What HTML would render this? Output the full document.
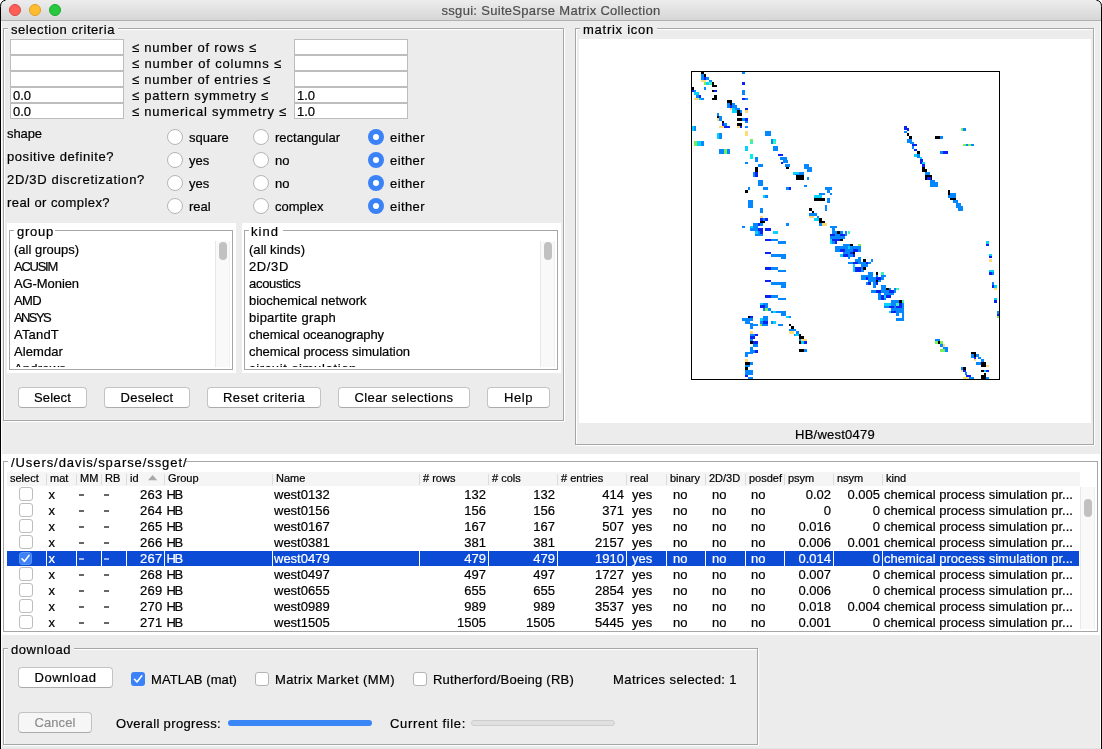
<!DOCTYPE html>
<html><head><meta charset="utf-8"><style>
html,body{margin:0;padding:0;width:1102px;height:749px;overflow:hidden;background:#fff}
#w{position:absolute;left:0;top:0;width:1102px;height:749px;overflow:hidden;will-change:transform;background:#fff}
.t{position:absolute;white-space:pre;font-family:"Liberation Sans",sans-serif}
.a{position:absolute}
</style></head><body><div id="w">
<div class="a" style="left:0;top:0;width:1102px;height:749px;background:#ececec;border-radius:6px 6px 0 0"></div>
<div style="position:absolute;left:1px;top:2px;width:1px;height:746px;background:#fff"></div>
<div style="position:absolute;left:1100px;top:2px;width:1px;height:746px;background:#fff"></div>
<div style="position:absolute;left:2px;top:748px;width:1098px;height:1px;background:#e4e4e4"></div>
<div class="a" style="left:1px;top:1px;width:1100px;height:19px;border-radius:5px 5px 0 0;background:linear-gradient(#ececec,#d6d6d6)"></div>
<div style="position:absolute;left:1px;top:20px;width:1100px;height:1px;background:#b1b1b1"></div>
<div class="a" style="left:9px;top:4px;width:12px;height:12px;box-sizing:border-box;border-radius:50%;background:#fe5f57;border:0.5px solid #e0443e"></div>
<div class="a" style="left:29px;top:4px;width:12px;height:12px;box-sizing:border-box;border-radius:50%;background:#febc2e;border:0.5px solid #dea123"></div>
<div class="a" style="left:49px;top:4px;width:12px;height:12px;box-sizing:border-box;border-radius:50%;background:#28c840;border:0.5px solid #1aab29"></div>
<div class="t" style="left:441.50px;top:4px;font-size:13px;line-height:13px;letter-spacing:0.303px;color:#4d4d4d;-webkit-text-stroke:0.2px #4d4d4d;">ssgui: SuiteSparse Matrix Collection</div>
<svg class="a" style="left:0;top:0" width="1102" height="749"><path d="M0.5 749 L0.5 6.5 Q0.5 0.8 5.5 0.3" stroke="#000" stroke-width="1" fill="none"/><path d="M1101.5 749 L1101.5 6.5 Q1101.5 0.8 1096.5 0.3" stroke="#000" stroke-width="1" fill="none"/></svg>
<div style="position:absolute;left:4px;top:29px;width:561px;height:393px;box-sizing:border-box;border:1px solid #ffffff;"></div>
<div style="position:absolute;left:3px;top:28px;width:561px;height:393px;box-sizing:border-box;border:1px solid #a6a6a6;"></div>
<div style="position:absolute;left:8px;top:24px;width:110px;height:10px;background:#ececec"></div>
<div class="t" style="left:11.00px;top:23px;font-size:13px;line-height:13px;letter-spacing:0.559px;color:#000;-webkit-text-stroke:0.2px #000;">selection criteria</div>
<div style="position:absolute;left:10px;top:39px;width:114px;height:16px;box-sizing:border-box;border:1px solid #bdbdbd;background:#fff"></div>
<div style="position:absolute;left:10px;top:55px;width:114px;height:16px;box-sizing:border-box;border:1px solid #bdbdbd;background:#fff"></div>
<div style="position:absolute;left:10px;top:71px;width:114px;height:16px;box-sizing:border-box;border:1px solid #bdbdbd;background:#fff"></div>
<div style="position:absolute;left:10px;top:87px;width:114px;height:16px;box-sizing:border-box;border:1px solid #bdbdbd;background:#fff"></div>
<div style="position:absolute;left:10px;top:103px;width:114px;height:16px;box-sizing:border-box;border:1px solid #bdbdbd;background:#fff"></div>
<div style="position:absolute;left:294px;top:39px;width:114px;height:16px;box-sizing:border-box;border:1px solid #bdbdbd;background:#fff"></div>
<div style="position:absolute;left:294px;top:55px;width:114px;height:16px;box-sizing:border-box;border:1px solid #bdbdbd;background:#fff"></div>
<div style="position:absolute;left:294px;top:71px;width:114px;height:16px;box-sizing:border-box;border:1px solid #bdbdbd;background:#fff"></div>
<div style="position:absolute;left:294px;top:87px;width:114px;height:16px;box-sizing:border-box;border:1px solid #bdbdbd;background:#fff"></div>
<div style="position:absolute;left:294px;top:103px;width:114px;height:16px;box-sizing:border-box;border:1px solid #bdbdbd;background:#fff"></div>
<div class="t" style="left:132.00px;top:41px;font-size:13px;line-height:13px;letter-spacing:0.773px;color:#000;-webkit-text-stroke:0.2px #000;">≤ number of rows ≤</div>
<div class="t" style="left:132.00px;top:57px;font-size:13px;line-height:13px;letter-spacing:0.855px;color:#000;-webkit-text-stroke:0.2px #000;">≤ number of columns ≤</div>
<div class="t" style="left:132.00px;top:73px;font-size:13px;line-height:13px;letter-spacing:0.778px;color:#000;-webkit-text-stroke:0.2px #000;">≤ number of entries ≤</div>
<div class="t" style="left:132.00px;top:89px;font-size:13px;line-height:13px;letter-spacing:0.754px;color:#000;-webkit-text-stroke:0.2px #000;">≤ pattern symmetry ≤</div>
<div class="t" style="left:132.00px;top:105px;font-size:13px;line-height:13px;letter-spacing:0.782px;color:#000;-webkit-text-stroke:0.2px #000;">≤ numerical symmetry ≤</div>
<div class="t" style="left:13.00px;top:89px;font-size:13px;line-height:13px;letter-spacing:0.000px;color:#000;-webkit-text-stroke:0.2px #000;">0.0</div>
<div class="t" style="left:13.00px;top:105px;font-size:13px;line-height:13px;letter-spacing:0.000px;color:#000;-webkit-text-stroke:0.2px #000;">0.0</div>
<div class="t" style="left:297.00px;top:89px;font-size:13px;line-height:13px;letter-spacing:0.000px;color:#000;-webkit-text-stroke:0.2px #000;">1.0</div>
<div class="t" style="left:297.00px;top:105px;font-size:13px;line-height:13px;letter-spacing:0.000px;color:#000;-webkit-text-stroke:0.2px #000;">1.0</div>
<div class="t" style="left:7.00px;top:127px;font-size:13px;line-height:13px;letter-spacing:-0.084px;color:#000;-webkit-text-stroke:0.2px #000;">shape</div>
<div class="t" style="left:7.00px;top:150px;font-size:13px;line-height:13px;letter-spacing:0.564px;color:#000;-webkit-text-stroke:0.2px #000;">positive definite?</div>
<div class="t" style="left:7.00px;top:173px;font-size:13px;line-height:13px;letter-spacing:0.688px;color:#000;-webkit-text-stroke:0.2px #000;">2D/3D discretization?</div>
<div class="t" style="left:7.00px;top:196px;font-size:13px;line-height:13px;letter-spacing:0.431px;color:#000;-webkit-text-stroke:0.2px #000;">real or complex?</div>
<div class="a" style="left:167px;top:129px;width:16px;height:16px;box-sizing:border-box;border-radius:50%;background:#fff;border:1px solid #b5b5b5"></div>
<div class="a" style="left:253px;top:129px;width:16px;height:16px;box-sizing:border-box;border-radius:50%;background:#fff;border:1px solid #b5b5b5"></div>
<div class="a" style="left:368px;top:129px;width:16px;height:16px;border-radius:50%;background:#3b82f7"></div>
<div class="a" style="left:373px;top:134px;width:6px;height:6px;border-radius:50%;background:#fff"></div>
<div class="t" style="left:189.00px;top:131px;font-size:13px;line-height:13px;letter-spacing:0.000px;color:#000;-webkit-text-stroke:0.2px #000;">square</div>
<div class="t" style="left:275.00px;top:131px;font-size:13px;line-height:13px;letter-spacing:0.000px;color:#000;-webkit-text-stroke:0.2px #000;">rectangular</div>
<div class="t" style="left:390.00px;top:131px;font-size:13px;line-height:13px;letter-spacing:0.411px;color:#000;-webkit-text-stroke:0.2px #000;">either</div>
<div class="a" style="left:167px;top:152px;width:16px;height:16px;box-sizing:border-box;border-radius:50%;background:#fff;border:1px solid #b5b5b5"></div>
<div class="a" style="left:253px;top:152px;width:16px;height:16px;box-sizing:border-box;border-radius:50%;background:#fff;border:1px solid #b5b5b5"></div>
<div class="a" style="left:368px;top:152px;width:16px;height:16px;border-radius:50%;background:#3b82f7"></div>
<div class="a" style="left:373px;top:157px;width:6px;height:6px;border-radius:50%;background:#fff"></div>
<div class="t" style="left:189.00px;top:154px;font-size:13px;line-height:13px;letter-spacing:0.000px;color:#000;-webkit-text-stroke:0.2px #000;">yes</div>
<div class="t" style="left:275.00px;top:154px;font-size:13px;line-height:13px;letter-spacing:0.000px;color:#000;-webkit-text-stroke:0.2px #000;">no</div>
<div class="t" style="left:390.00px;top:154px;font-size:13px;line-height:13px;letter-spacing:0.411px;color:#000;-webkit-text-stroke:0.2px #000;">either</div>
<div class="a" style="left:167px;top:175px;width:16px;height:16px;box-sizing:border-box;border-radius:50%;background:#fff;border:1px solid #b5b5b5"></div>
<div class="a" style="left:253px;top:175px;width:16px;height:16px;box-sizing:border-box;border-radius:50%;background:#fff;border:1px solid #b5b5b5"></div>
<div class="a" style="left:368px;top:175px;width:16px;height:16px;border-radius:50%;background:#3b82f7"></div>
<div class="a" style="left:373px;top:180px;width:6px;height:6px;border-radius:50%;background:#fff"></div>
<div class="t" style="left:189.00px;top:177px;font-size:13px;line-height:13px;letter-spacing:0.000px;color:#000;-webkit-text-stroke:0.2px #000;">yes</div>
<div class="t" style="left:275.00px;top:177px;font-size:13px;line-height:13px;letter-spacing:0.000px;color:#000;-webkit-text-stroke:0.2px #000;">no</div>
<div class="t" style="left:390.00px;top:177px;font-size:13px;line-height:13px;letter-spacing:0.411px;color:#000;-webkit-text-stroke:0.2px #000;">either</div>
<div class="a" style="left:167px;top:198px;width:16px;height:16px;box-sizing:border-box;border-radius:50%;background:#fff;border:1px solid #b5b5b5"></div>
<div class="a" style="left:253px;top:198px;width:16px;height:16px;box-sizing:border-box;border-radius:50%;background:#fff;border:1px solid #b5b5b5"></div>
<div class="a" style="left:368px;top:198px;width:16px;height:16px;border-radius:50%;background:#3b82f7"></div>
<div class="a" style="left:373px;top:203px;width:6px;height:6px;border-radius:50%;background:#fff"></div>
<div class="t" style="left:189.00px;top:200px;font-size:13px;line-height:13px;letter-spacing:0.000px;color:#000;-webkit-text-stroke:0.2px #000;">real</div>
<div class="t" style="left:275.00px;top:200px;font-size:13px;line-height:13px;letter-spacing:0.000px;color:#000;-webkit-text-stroke:0.2px #000;">complex</div>
<div class="t" style="left:390.00px;top:200px;font-size:13px;line-height:13px;letter-spacing:0.411px;color:#000;-webkit-text-stroke:0.2px #000;">either</div>
<div style="position:absolute;left:7px;top:223px;width:229px;height:150px;background:#fff"></div>
<div style="position:absolute;left:9px;top:230px;width:224px;height:140px;box-sizing:border-box;border:1px solid #a6a6a6;"></div>
<div style="position:absolute;left:14px;top:225px;width:0px;height:10px;background:#fff;width:41px"></div>
<div class="t" style="left:17.00px;top:225px;font-size:13px;line-height:13px;letter-spacing:0.750px;color:#000;-webkit-text-stroke:0.2px #000;">group</div>
<div class="a" style="left:10px;top:241px;width:222px;height:126px;overflow:hidden">
<div class="t" style="left:4.00px;top:2px;font-size:13px;line-height:13px;letter-spacing:-0.003px;color:#000;-webkit-text-stroke:0.2px #000;">(all groups)</div>
<div class="t" style="left:4.00px;top:19px;font-size:13px;line-height:13px;letter-spacing:-1.260px;color:#000;-webkit-text-stroke:0.2px #000;">ACUSIM</div>
<div class="t" style="left:4.00px;top:36px;font-size:13px;line-height:13px;letter-spacing:-0.083px;color:#000;-webkit-text-stroke:0.2px #000;">AG-Monien</div>
<div class="t" style="left:4.00px;top:53px;font-size:13px;line-height:13px;letter-spacing:-0.630px;color:#000;-webkit-text-stroke:0.2px #000;">AMD</div>
<div class="t" style="left:4.00px;top:70px;font-size:13px;line-height:13px;letter-spacing:-1.616px;color:#000;-webkit-text-stroke:0.2px #000;">ANSYS</div>
<div class="t" style="left:4.00px;top:87px;font-size:13px;line-height:13px;letter-spacing:0.193px;color:#000;-webkit-text-stroke:0.2px #000;">ATandT</div>
<div class="t" style="left:4.00px;top:104px;font-size:13px;line-height:13px;letter-spacing:0.083px;color:#000;-webkit-text-stroke:0.2px #000;">Alemdar</div>
<div class="t" style="left:4.00px;top:121px;font-size:13px;line-height:13px;letter-spacing:0.203px;color:#000;-webkit-text-stroke:0.2px #000;">Andrews</div>
</div>
<div style="position:absolute;left:215px;top:241px;width:15px;height:126px;background:#f9f9f9;border-left:1px solid #e8e8e8;border-right:1px solid #f0f0f0;box-sizing:border-box"></div>
<div class="a" style="left:219px;top:242px;width:8px;height:18px;border-radius:4px;background:#c1c1c1"></div>
<div style="position:absolute;left:242px;top:223px;width:319px;height:150px;background:#fff"></div>
<div style="position:absolute;left:244px;top:230px;width:314px;height:140px;box-sizing:border-box;border:1px solid #a6a6a6;"></div>
<div style="position:absolute;left:249px;top:225px;width:0px;height:10px;background:#fff;width:34px"></div>
<div class="t" style="left:251.00px;top:225px;font-size:13px;line-height:13px;letter-spacing:1.035px;color:#000;-webkit-text-stroke:0.2px #000;">kind</div>
<div class="a" style="left:245px;top:241px;width:312px;height:126px;overflow:hidden">
<div class="t" style="left:4.00px;top:2px;font-size:13px;line-height:13px;letter-spacing:0.034px;color:#000;-webkit-text-stroke:0.2px #000;">(all kinds)</div>
<div class="t" style="left:4.00px;top:19px;font-size:13px;line-height:13px;letter-spacing:0.628px;color:#000;-webkit-text-stroke:0.2px #000;">2D/3D</div>
<div class="t" style="left:4.00px;top:36px;font-size:13px;line-height:13px;letter-spacing:-0.300px;color:#000;-webkit-text-stroke:0.2px #000;">acoustics</div>
<div class="t" style="left:4.00px;top:53px;font-size:13px;line-height:13px;letter-spacing:-0.015px;color:#000;-webkit-text-stroke:0.2px #000;">biochemical network</div>
<div class="t" style="left:4.00px;top:70px;font-size:13px;line-height:13px;letter-spacing:0.258px;color:#000;-webkit-text-stroke:0.2px #000;">bipartite graph</div>
<div class="t" style="left:4.00px;top:87px;font-size:13px;line-height:13px;letter-spacing:-0.110px;color:#000;-webkit-text-stroke:0.2px #000;">chemical oceanography</div>
<div class="t" style="left:4.00px;top:104px;font-size:13px;line-height:13px;letter-spacing:-0.058px;color:#000;-webkit-text-stroke:0.2px #000;">chemical process simulation</div>
<div class="t" style="left:4.00px;top:121px;font-size:13px;line-height:13px;letter-spacing:0.661px;color:#000;-webkit-text-stroke:0.2px #000;">circuit simulation</div>
</div>
<div style="position:absolute;left:540px;top:241px;width:15px;height:126px;background:#f9f9f9;border-left:1px solid #e8e8e8;border-right:1px solid #f0f0f0;box-sizing:border-box"></div>
<div class="a" style="left:544px;top:242px;width:8px;height:18px;border-radius:4px;background:#c1c1c1"></div>
<div class="a" style="left:18px;top:387px;width:69px;height:21px;box-sizing:border-box;border:1px solid #c3c3c3;border-bottom-color:#ababab;border-radius:4px;background:#fff"></div>
<div class="t" style="left:34.00px;top:391px;font-size:13px;line-height:13px;letter-spacing:0.143px;color:#000;-webkit-text-stroke:0.2px #000;">Select</div>
<div class="a" style="left:104px;top:387px;width:86px;height:21px;box-sizing:border-box;border:1px solid #c3c3c3;border-bottom-color:#ababab;border-radius:4px;background:#fff"></div>
<div class="t" style="left:120.50px;top:391px;font-size:13px;line-height:13px;letter-spacing:0.303px;color:#000;-webkit-text-stroke:0.2px #000;">Deselect</div>
<div class="a" style="left:207px;top:387px;width:114px;height:21px;box-sizing:border-box;border:1px solid #c3c3c3;border-bottom-color:#ababab;border-radius:4px;background:#fff"></div>
<div class="t" style="left:223.00px;top:391px;font-size:13px;line-height:13px;letter-spacing:0.387px;color:#000;-webkit-text-stroke:0.2px #000;">Reset criteria</div>
<div class="a" style="left:338px;top:387px;width:132px;height:21px;box-sizing:border-box;border:1px solid #c3c3c3;border-bottom-color:#ababab;border-radius:4px;background:#fff"></div>
<div class="t" style="left:354.50px;top:391px;font-size:13px;line-height:13px;letter-spacing:0.406px;color:#000;-webkit-text-stroke:0.2px #000;">Clear selections</div>
<div class="a" style="left:487px;top:387px;width:63px;height:21px;box-sizing:border-box;border:1px solid #c3c3c3;border-bottom-color:#ababab;border-radius:4px;background:#fff"></div>
<div class="t" style="left:504.00px;top:391px;font-size:13px;line-height:13px;letter-spacing:0.562px;color:#000;-webkit-text-stroke:0.2px #000;">Help</div>
<div style="position:absolute;left:576px;top:29px;width:519px;height:417px;box-sizing:border-box;border:1px solid #ffffff;"></div>
<div style="position:absolute;left:575px;top:28px;width:519px;height:417px;box-sizing:border-box;border:1px solid #a6a6a6;"></div>
<div style="position:absolute;left:580px;top:24px;width:77px;height:10px;background:#ececec"></div>
<div class="t" style="left:583.00px;top:23px;font-size:13px;line-height:13px;letter-spacing:0.740px;color:#000;-webkit-text-stroke:0.2px #000;">matrix icon</div>
<div style="position:absolute;left:579px;top:39px;width:512px;height:384px;background:#fff"></div>
<div style="position:absolute;left:691px;top:71px;width:309px;height:309px;box-sizing:border-box;border:1px solid #000;"></div>
<div class="t" style="left:795.00px;top:428px;font-size:13px;line-height:13px;letter-spacing:0.243px;color:#000;-webkit-text-stroke:0.2px #000;">HB/west0479</div>
<div style="position:absolute;left:1px;top:454px;width:1100px;height:181px;background:#fff"></div>
<div style="position:absolute;left:3px;top:461px;width:1095px;height:171px;box-sizing:border-box;border:1px solid #a6a6a6;"></div>
<div style="position:absolute;left:8px;top:457px;width:178px;height:10px;background:#fff"></div>
<div class="t" style="left:11.00px;top:456px;font-size:13px;line-height:13px;letter-spacing:0.925px;color:#000;-webkit-text-stroke:0.2px #000;">/Users/davis/sparse/ssget/</div>
<div style="position:absolute;left:7px;top:472px;width:1073px;height:14px;background:#f5f5f5"></div>
<div class="t" style="left:10.00px;top:473px;font-size:11px;line-height:11px;letter-spacing:0.000px;color:#000;-webkit-text-stroke:0.2px #000;">select</div>
<div class="t" style="left:50.00px;top:473px;font-size:11px;line-height:11px;letter-spacing:0.000px;color:#000;-webkit-text-stroke:0.2px #000;">mat</div>
<div style="position:absolute;left:46px;top:474px;width:1px;height:11px;background:#dcdcdc"></div>
<div class="t" style="left:80.00px;top:473px;font-size:11px;line-height:11px;letter-spacing:0.000px;color:#000;-webkit-text-stroke:0.2px #000;">MM</div>
<div style="position:absolute;left:76px;top:474px;width:1px;height:11px;background:#dcdcdc"></div>
<div class="t" style="left:105.00px;top:473px;font-size:11px;line-height:11px;letter-spacing:0.000px;color:#000;-webkit-text-stroke:0.2px #000;">RB</div>
<div style="position:absolute;left:101px;top:474px;width:1px;height:11px;background:#dcdcdc"></div>
<div class="t" style="left:130.00px;top:473px;font-size:11px;line-height:11px;letter-spacing:0.000px;color:#000;-webkit-text-stroke:0.2px #000;">id</div>
<div style="position:absolute;left:126px;top:474px;width:1px;height:11px;background:#dcdcdc"></div>
<div class="t" style="left:168.00px;top:473px;font-size:11px;line-height:11px;letter-spacing:0.000px;color:#000;-webkit-text-stroke:0.2px #000;">Group</div>
<div style="position:absolute;left:164px;top:474px;width:1px;height:11px;background:#dcdcdc"></div>
<div class="t" style="left:276.00px;top:473px;font-size:11px;line-height:11px;letter-spacing:0.000px;color:#000;-webkit-text-stroke:0.2px #000;">Name</div>
<div style="position:absolute;left:272px;top:474px;width:1px;height:11px;background:#dcdcdc"></div>
<div class="t" style="left:423.00px;top:473px;font-size:11px;line-height:11px;letter-spacing:0.000px;color:#000;-webkit-text-stroke:0.2px #000;"># rows</div>
<div style="position:absolute;left:419px;top:474px;width:1px;height:11px;background:#dcdcdc"></div>
<div class="t" style="left:492.00px;top:473px;font-size:11px;line-height:11px;letter-spacing:0.000px;color:#000;-webkit-text-stroke:0.2px #000;"># cols</div>
<div style="position:absolute;left:488px;top:474px;width:1px;height:11px;background:#dcdcdc"></div>
<div class="t" style="left:561.00px;top:473px;font-size:11px;line-height:11px;letter-spacing:0.000px;color:#000;-webkit-text-stroke:0.2px #000;"># entries</div>
<div style="position:absolute;left:557px;top:474px;width:1px;height:11px;background:#dcdcdc"></div>
<div class="t" style="left:630.00px;top:473px;font-size:11px;line-height:11px;letter-spacing:0.000px;color:#000;-webkit-text-stroke:0.2px #000;">real</div>
<div style="position:absolute;left:626px;top:474px;width:1px;height:11px;background:#dcdcdc"></div>
<div class="t" style="left:670.00px;top:473px;font-size:11px;line-height:11px;letter-spacing:0.000px;color:#000;-webkit-text-stroke:0.2px #000;">binary</div>
<div style="position:absolute;left:666px;top:474px;width:1px;height:11px;background:#dcdcdc"></div>
<div class="t" style="left:709.00px;top:473px;font-size:11px;line-height:11px;letter-spacing:0.000px;color:#000;-webkit-text-stroke:0.2px #000;">2D/3D</div>
<div style="position:absolute;left:705px;top:474px;width:1px;height:11px;background:#dcdcdc"></div>
<div class="t" style="left:749.00px;top:473px;font-size:11px;line-height:11px;letter-spacing:0.000px;color:#000;-webkit-text-stroke:0.2px #000;">posdef</div>
<div style="position:absolute;left:745px;top:474px;width:1px;height:11px;background:#dcdcdc"></div>
<div class="t" style="left:788.00px;top:473px;font-size:11px;line-height:11px;letter-spacing:0.000px;color:#000;-webkit-text-stroke:0.2px #000;">psym</div>
<div style="position:absolute;left:784px;top:474px;width:1px;height:11px;background:#dcdcdc"></div>
<div class="t" style="left:837.00px;top:473px;font-size:11px;line-height:11px;letter-spacing:0.000px;color:#000;-webkit-text-stroke:0.2px #000;">nsym</div>
<div style="position:absolute;left:833px;top:474px;width:1px;height:11px;background:#dcdcdc"></div>
<div class="t" style="left:886.00px;top:473px;font-size:11px;line-height:11px;letter-spacing:0.000px;color:#000;-webkit-text-stroke:0.2px #000;">kind</div>
<div style="position:absolute;left:882px;top:474px;width:1px;height:11px;background:#dcdcdc"></div>
<svg class="a" style="left:148px;top:474px" width="10" height="7"><path d="M0 6.2 L4.6 1 L9.2 6.2 Z" fill="#a9a9a9"/></svg>
<div class="a" style="left:19px;top:487px;width:14px;height:14px;box-sizing:border-box;border-radius:3px;background:#fff;border:1px solid #bdbdbd"></div>
<div class="t" style="left:48.50px;top:488px;font-size:13px;line-height:13px;letter-spacing:0.000px;color:#000;-webkit-text-stroke:0.2px #000;">x</div>
<div style="position:absolute;left:79px;top:494px;width:5px;height:2px;background:#000;opacity:0.6"></div>
<div style="position:absolute;left:104px;top:494px;width:5px;height:2px;background:#000;opacity:0.6"></div>
<div class="t" style="left:140.00px;top:488px;font-size:13px;line-height:13px;letter-spacing:0.266px;color:#000;-webkit-text-stroke:0.2px #000;">263</div>
<div class="t" style="left:166.50px;top:488px;font-size:13px;line-height:13px;letter-spacing:-1.281px;color:#000;-webkit-text-stroke:0.2px #000;">HB</div>
<div class="t" style="left:274.00px;top:488px;font-size:13px;line-height:13px;letter-spacing:0.000px;color:#000;-webkit-text-stroke:0.2px #000;">west0132</div>
<div class="t" style="left:464.30px;top:488px;font-size:13px;line-height:13px;letter-spacing:0.000px;color:#000;-webkit-text-stroke:0.2px #000;">132</div>
<div class="t" style="left:533.30px;top:488px;font-size:13px;line-height:13px;letter-spacing:0.000px;color:#000;-webkit-text-stroke:0.2px #000;">132</div>
<div class="t" style="left:602.30px;top:488px;font-size:13px;line-height:13px;letter-spacing:0.000px;color:#000;-webkit-text-stroke:0.2px #000;">414</div>
<div class="t" style="left:632.00px;top:488px;font-size:13px;line-height:13px;letter-spacing:0.000px;color:#000;-webkit-text-stroke:0.2px #000;">yes</div>
<div class="t" style="left:673.00px;top:488px;font-size:13px;line-height:13px;letter-spacing:0.000px;color:#000;-webkit-text-stroke:0.2px #000;">no</div>
<div class="t" style="left:712.00px;top:488px;font-size:13px;line-height:13px;letter-spacing:0.000px;color:#000;-webkit-text-stroke:0.2px #000;">no</div>
<div class="t" style="left:751.00px;top:488px;font-size:13px;line-height:13px;letter-spacing:0.000px;color:#000;-webkit-text-stroke:0.2px #000;">no</div>
<div class="t" style="left:805.69px;top:488px;font-size:13px;line-height:13px;letter-spacing:0.000px;color:#000;-webkit-text-stroke:0.2px #000;">0.02</div>
<div class="t" style="left:847.45px;top:488px;font-size:13px;line-height:13px;letter-spacing:0.000px;color:#000;-webkit-text-stroke:0.2px #000;">0.005</div>
<div class="t" style="left:884.00px;top:488px;font-size:13px;line-height:13px;letter-spacing:0.035px;color:#000;-webkit-text-stroke:0.2px #000;">chemical process simulation pr...</div>
<div class="a" style="left:19px;top:503px;width:14px;height:14px;box-sizing:border-box;border-radius:3px;background:#fff;border:1px solid #bdbdbd"></div>
<div class="t" style="left:48.50px;top:504px;font-size:13px;line-height:13px;letter-spacing:0.000px;color:#000;-webkit-text-stroke:0.2px #000;">x</div>
<div style="position:absolute;left:79px;top:510px;width:5px;height:2px;background:#000;opacity:0.6"></div>
<div style="position:absolute;left:104px;top:510px;width:5px;height:2px;background:#000;opacity:0.6"></div>
<div class="t" style="left:140.00px;top:504px;font-size:13px;line-height:13px;letter-spacing:0.266px;color:#000;-webkit-text-stroke:0.2px #000;">264</div>
<div class="t" style="left:166.50px;top:504px;font-size:13px;line-height:13px;letter-spacing:-1.281px;color:#000;-webkit-text-stroke:0.2px #000;">HB</div>
<div class="t" style="left:274.00px;top:504px;font-size:13px;line-height:13px;letter-spacing:0.000px;color:#000;-webkit-text-stroke:0.2px #000;">west0156</div>
<div class="t" style="left:464.30px;top:504px;font-size:13px;line-height:13px;letter-spacing:0.000px;color:#000;-webkit-text-stroke:0.2px #000;">156</div>
<div class="t" style="left:533.30px;top:504px;font-size:13px;line-height:13px;letter-spacing:0.000px;color:#000;-webkit-text-stroke:0.2px #000;">156</div>
<div class="t" style="left:602.30px;top:504px;font-size:13px;line-height:13px;letter-spacing:0.000px;color:#000;-webkit-text-stroke:0.2px #000;">371</div>
<div class="t" style="left:632.00px;top:504px;font-size:13px;line-height:13px;letter-spacing:0.000px;color:#000;-webkit-text-stroke:0.2px #000;">yes</div>
<div class="t" style="left:673.00px;top:504px;font-size:13px;line-height:13px;letter-spacing:0.000px;color:#000;-webkit-text-stroke:0.2px #000;">no</div>
<div class="t" style="left:712.00px;top:504px;font-size:13px;line-height:13px;letter-spacing:0.000px;color:#000;-webkit-text-stroke:0.2px #000;">no</div>
<div class="t" style="left:751.00px;top:504px;font-size:13px;line-height:13px;letter-spacing:0.000px;color:#000;-webkit-text-stroke:0.2px #000;">no</div>
<div class="t" style="left:823.77px;top:504px;font-size:13px;line-height:13px;letter-spacing:0.000px;color:#000;-webkit-text-stroke:0.2px #000;">0</div>
<div class="t" style="left:872.77px;top:504px;font-size:13px;line-height:13px;letter-spacing:0.000px;color:#000;-webkit-text-stroke:0.2px #000;">0</div>
<div class="t" style="left:884.00px;top:504px;font-size:13px;line-height:13px;letter-spacing:0.035px;color:#000;-webkit-text-stroke:0.2px #000;">chemical process simulation pr...</div>
<div class="a" style="left:19px;top:519px;width:14px;height:14px;box-sizing:border-box;border-radius:3px;background:#fff;border:1px solid #bdbdbd"></div>
<div class="t" style="left:48.50px;top:520px;font-size:13px;line-height:13px;letter-spacing:0.000px;color:#000;-webkit-text-stroke:0.2px #000;">x</div>
<div style="position:absolute;left:79px;top:526px;width:5px;height:2px;background:#000;opacity:0.6"></div>
<div style="position:absolute;left:104px;top:526px;width:5px;height:2px;background:#000;opacity:0.6"></div>
<div class="t" style="left:140.00px;top:520px;font-size:13px;line-height:13px;letter-spacing:0.266px;color:#000;-webkit-text-stroke:0.2px #000;">265</div>
<div class="t" style="left:166.50px;top:520px;font-size:13px;line-height:13px;letter-spacing:-1.281px;color:#000;-webkit-text-stroke:0.2px #000;">HB</div>
<div class="t" style="left:274.00px;top:520px;font-size:13px;line-height:13px;letter-spacing:0.000px;color:#000;-webkit-text-stroke:0.2px #000;">west0167</div>
<div class="t" style="left:464.30px;top:520px;font-size:13px;line-height:13px;letter-spacing:0.000px;color:#000;-webkit-text-stroke:0.2px #000;">167</div>
<div class="t" style="left:533.30px;top:520px;font-size:13px;line-height:13px;letter-spacing:0.000px;color:#000;-webkit-text-stroke:0.2px #000;">167</div>
<div class="t" style="left:602.30px;top:520px;font-size:13px;line-height:13px;letter-spacing:0.000px;color:#000;-webkit-text-stroke:0.2px #000;">507</div>
<div class="t" style="left:632.00px;top:520px;font-size:13px;line-height:13px;letter-spacing:0.000px;color:#000;-webkit-text-stroke:0.2px #000;">yes</div>
<div class="t" style="left:673.00px;top:520px;font-size:13px;line-height:13px;letter-spacing:0.000px;color:#000;-webkit-text-stroke:0.2px #000;">no</div>
<div class="t" style="left:712.00px;top:520px;font-size:13px;line-height:13px;letter-spacing:0.000px;color:#000;-webkit-text-stroke:0.2px #000;">no</div>
<div class="t" style="left:751.00px;top:520px;font-size:13px;line-height:13px;letter-spacing:0.000px;color:#000;-webkit-text-stroke:0.2px #000;">no</div>
<div class="t" style="left:798.45px;top:520px;font-size:13px;line-height:13px;letter-spacing:0.000px;color:#000;-webkit-text-stroke:0.2px #000;">0.016</div>
<div class="t" style="left:872.77px;top:520px;font-size:13px;line-height:13px;letter-spacing:0.000px;color:#000;-webkit-text-stroke:0.2px #000;">0</div>
<div class="t" style="left:884.00px;top:520px;font-size:13px;line-height:13px;letter-spacing:0.035px;color:#000;-webkit-text-stroke:0.2px #000;">chemical process simulation pr...</div>
<div class="a" style="left:19px;top:535px;width:14px;height:14px;box-sizing:border-box;border-radius:3px;background:#fff;border:1px solid #bdbdbd"></div>
<div class="t" style="left:48.50px;top:536px;font-size:13px;line-height:13px;letter-spacing:0.000px;color:#000;-webkit-text-stroke:0.2px #000;">x</div>
<div style="position:absolute;left:79px;top:542px;width:5px;height:2px;background:#000;opacity:0.6"></div>
<div style="position:absolute;left:104px;top:542px;width:5px;height:2px;background:#000;opacity:0.6"></div>
<div class="t" style="left:140.00px;top:536px;font-size:13px;line-height:13px;letter-spacing:0.266px;color:#000;-webkit-text-stroke:0.2px #000;">266</div>
<div class="t" style="left:166.50px;top:536px;font-size:13px;line-height:13px;letter-spacing:-1.281px;color:#000;-webkit-text-stroke:0.2px #000;">HB</div>
<div class="t" style="left:274.00px;top:536px;font-size:13px;line-height:13px;letter-spacing:0.000px;color:#000;-webkit-text-stroke:0.2px #000;">west0381</div>
<div class="t" style="left:464.30px;top:536px;font-size:13px;line-height:13px;letter-spacing:0.000px;color:#000;-webkit-text-stroke:0.2px #000;">381</div>
<div class="t" style="left:533.30px;top:536px;font-size:13px;line-height:13px;letter-spacing:0.000px;color:#000;-webkit-text-stroke:0.2px #000;">381</div>
<div class="t" style="left:595.08px;top:536px;font-size:13px;line-height:13px;letter-spacing:0.000px;color:#000;-webkit-text-stroke:0.2px #000;">2157</div>
<div class="t" style="left:632.00px;top:536px;font-size:13px;line-height:13px;letter-spacing:0.000px;color:#000;-webkit-text-stroke:0.2px #000;">yes</div>
<div class="t" style="left:673.00px;top:536px;font-size:13px;line-height:13px;letter-spacing:0.000px;color:#000;-webkit-text-stroke:0.2px #000;">no</div>
<div class="t" style="left:712.00px;top:536px;font-size:13px;line-height:13px;letter-spacing:0.000px;color:#000;-webkit-text-stroke:0.2px #000;">no</div>
<div class="t" style="left:751.00px;top:536px;font-size:13px;line-height:13px;letter-spacing:0.000px;color:#000;-webkit-text-stroke:0.2px #000;">no</div>
<div class="t" style="left:798.45px;top:536px;font-size:13px;line-height:13px;letter-spacing:0.000px;color:#000;-webkit-text-stroke:0.2px #000;">0.006</div>
<div class="t" style="left:847.45px;top:536px;font-size:13px;line-height:13px;letter-spacing:0.000px;color:#000;-webkit-text-stroke:0.2px #000;">0.001</div>
<div class="t" style="left:884.00px;top:536px;font-size:13px;line-height:13px;letter-spacing:0.035px;color:#000;-webkit-text-stroke:0.2px #000;">chemical process simulation pr...</div>
<div style="position:absolute;left:7px;top:551px;width:39px;height:15px;background:#0b4bd6"></div>
<div style="position:absolute;left:47px;top:551px;width:29px;height:15px;background:#0b4bd6"></div>
<div style="position:absolute;left:77px;top:551px;width:24px;height:15px;background:#0b4bd6"></div>
<div style="position:absolute;left:102px;top:551px;width:24px;height:15px;background:#0b4bd6"></div>
<div style="position:absolute;left:127px;top:551px;width:37px;height:15px;background:#0b4bd6"></div>
<div style="position:absolute;left:165px;top:551px;width:107px;height:15px;background:#0b4bd6"></div>
<div style="position:absolute;left:273px;top:551px;width:146px;height:15px;background:#0b4bd6"></div>
<div style="position:absolute;left:420px;top:551px;width:68px;height:15px;background:#0b4bd6"></div>
<div style="position:absolute;left:489px;top:551px;width:68px;height:15px;background:#0b4bd6"></div>
<div style="position:absolute;left:558px;top:551px;width:68px;height:15px;background:#0b4bd6"></div>
<div style="position:absolute;left:627px;top:551px;width:39px;height:15px;background:#0b4bd6"></div>
<div style="position:absolute;left:667px;top:551px;width:38px;height:15px;background:#0b4bd6"></div>
<div style="position:absolute;left:706px;top:551px;width:39px;height:15px;background:#0b4bd6"></div>
<div style="position:absolute;left:746px;top:551px;width:38px;height:15px;background:#0b4bd6"></div>
<div style="position:absolute;left:785px;top:551px;width:48px;height:15px;background:#0b4bd6"></div>
<div style="position:absolute;left:834px;top:551px;width:48px;height:15px;background:#0b4bd6"></div>
<div style="position:absolute;left:883px;top:551px;width:196px;height:15px;background:#0b4bd6"></div>
<div class="a" style="left:19px;top:552px;width:13px;height:13px;box-sizing:border-box;border-radius:3px;background:#3f82f7;border:1px solid #5a94f5"></div>
<svg class="a" style="left:19px;top:552px" width="13" height="13"><path d="M3 6.8 L5.4 9.4 L10 3.4" stroke="#fff" stroke-width="1.6" fill="none" stroke-linecap="round" stroke-linejoin="round"/></svg>
<div class="t" style="left:48.50px;top:552px;font-size:13px;line-height:13px;letter-spacing:0.000px;color:#fff;-webkit-text-stroke:0.2px #fff;">x</div>
<div style="position:absolute;left:79px;top:558px;width:5px;height:2px;background:#fff;opacity:0.6"></div>
<div style="position:absolute;left:104px;top:558px;width:5px;height:2px;background:#fff;opacity:0.6"></div>
<div class="t" style="left:140.00px;top:552px;font-size:13px;line-height:13px;letter-spacing:0.266px;color:#fff;-webkit-text-stroke:0.2px #fff;">267</div>
<div class="t" style="left:166.50px;top:552px;font-size:13px;line-height:13px;letter-spacing:-1.281px;color:#fff;-webkit-text-stroke:0.2px #fff;">HB</div>
<div class="t" style="left:274.00px;top:552px;font-size:13px;line-height:13px;letter-spacing:0.000px;color:#fff;-webkit-text-stroke:0.2px #fff;">west0479</div>
<div class="t" style="left:464.30px;top:552px;font-size:13px;line-height:13px;letter-spacing:0.000px;color:#fff;-webkit-text-stroke:0.2px #fff;">479</div>
<div class="t" style="left:533.30px;top:552px;font-size:13px;line-height:13px;letter-spacing:0.000px;color:#fff;-webkit-text-stroke:0.2px #fff;">479</div>
<div class="t" style="left:595.08px;top:552px;font-size:13px;line-height:13px;letter-spacing:0.000px;color:#fff;-webkit-text-stroke:0.2px #fff;">1910</div>
<div class="t" style="left:632.00px;top:552px;font-size:13px;line-height:13px;letter-spacing:0.000px;color:#fff;-webkit-text-stroke:0.2px #fff;">yes</div>
<div class="t" style="left:673.00px;top:552px;font-size:13px;line-height:13px;letter-spacing:0.000px;color:#fff;-webkit-text-stroke:0.2px #fff;">no</div>
<div class="t" style="left:712.00px;top:552px;font-size:13px;line-height:13px;letter-spacing:0.000px;color:#fff;-webkit-text-stroke:0.2px #fff;">no</div>
<div class="t" style="left:751.00px;top:552px;font-size:13px;line-height:13px;letter-spacing:0.000px;color:#fff;-webkit-text-stroke:0.2px #fff;">no</div>
<div class="t" style="left:798.45px;top:552px;font-size:13px;line-height:13px;letter-spacing:0.000px;color:#fff;-webkit-text-stroke:0.2px #fff;">0.014</div>
<div class="t" style="left:872.77px;top:552px;font-size:13px;line-height:13px;letter-spacing:0.000px;color:#fff;-webkit-text-stroke:0.2px #fff;">0</div>
<div class="t" style="left:884.00px;top:552px;font-size:13px;line-height:13px;letter-spacing:0.035px;color:#fff;-webkit-text-stroke:0.2px #fff;">chemical process simulation pr...</div>
<div class="a" style="left:19px;top:567px;width:14px;height:14px;box-sizing:border-box;border-radius:3px;background:#fff;border:1px solid #bdbdbd"></div>
<div class="t" style="left:48.50px;top:568px;font-size:13px;line-height:13px;letter-spacing:0.000px;color:#000;-webkit-text-stroke:0.2px #000;">x</div>
<div style="position:absolute;left:79px;top:574px;width:5px;height:2px;background:#000;opacity:0.6"></div>
<div style="position:absolute;left:104px;top:574px;width:5px;height:2px;background:#000;opacity:0.6"></div>
<div class="t" style="left:140.00px;top:568px;font-size:13px;line-height:13px;letter-spacing:0.266px;color:#000;-webkit-text-stroke:0.2px #000;">268</div>
<div class="t" style="left:166.50px;top:568px;font-size:13px;line-height:13px;letter-spacing:-1.281px;color:#000;-webkit-text-stroke:0.2px #000;">HB</div>
<div class="t" style="left:274.00px;top:568px;font-size:13px;line-height:13px;letter-spacing:0.000px;color:#000;-webkit-text-stroke:0.2px #000;">west0497</div>
<div class="t" style="left:464.30px;top:568px;font-size:13px;line-height:13px;letter-spacing:0.000px;color:#000;-webkit-text-stroke:0.2px #000;">497</div>
<div class="t" style="left:533.30px;top:568px;font-size:13px;line-height:13px;letter-spacing:0.000px;color:#000;-webkit-text-stroke:0.2px #000;">497</div>
<div class="t" style="left:595.08px;top:568px;font-size:13px;line-height:13px;letter-spacing:0.000px;color:#000;-webkit-text-stroke:0.2px #000;">1727</div>
<div class="t" style="left:632.00px;top:568px;font-size:13px;line-height:13px;letter-spacing:0.000px;color:#000;-webkit-text-stroke:0.2px #000;">yes</div>
<div class="t" style="left:673.00px;top:568px;font-size:13px;line-height:13px;letter-spacing:0.000px;color:#000;-webkit-text-stroke:0.2px #000;">no</div>
<div class="t" style="left:712.00px;top:568px;font-size:13px;line-height:13px;letter-spacing:0.000px;color:#000;-webkit-text-stroke:0.2px #000;">no</div>
<div class="t" style="left:751.00px;top:568px;font-size:13px;line-height:13px;letter-spacing:0.000px;color:#000;-webkit-text-stroke:0.2px #000;">no</div>
<div class="t" style="left:798.45px;top:568px;font-size:13px;line-height:13px;letter-spacing:0.000px;color:#000;-webkit-text-stroke:0.2px #000;">0.007</div>
<div class="t" style="left:872.77px;top:568px;font-size:13px;line-height:13px;letter-spacing:0.000px;color:#000;-webkit-text-stroke:0.2px #000;">0</div>
<div class="t" style="left:884.00px;top:568px;font-size:13px;line-height:13px;letter-spacing:0.035px;color:#000;-webkit-text-stroke:0.2px #000;">chemical process simulation pr...</div>
<div class="a" style="left:19px;top:583px;width:14px;height:14px;box-sizing:border-box;border-radius:3px;background:#fff;border:1px solid #bdbdbd"></div>
<div class="t" style="left:48.50px;top:584px;font-size:13px;line-height:13px;letter-spacing:0.000px;color:#000;-webkit-text-stroke:0.2px #000;">x</div>
<div style="position:absolute;left:79px;top:590px;width:5px;height:2px;background:#000;opacity:0.6"></div>
<div style="position:absolute;left:104px;top:590px;width:5px;height:2px;background:#000;opacity:0.6"></div>
<div class="t" style="left:140.00px;top:584px;font-size:13px;line-height:13px;letter-spacing:0.266px;color:#000;-webkit-text-stroke:0.2px #000;">269</div>
<div class="t" style="left:166.50px;top:584px;font-size:13px;line-height:13px;letter-spacing:-1.281px;color:#000;-webkit-text-stroke:0.2px #000;">HB</div>
<div class="t" style="left:274.00px;top:584px;font-size:13px;line-height:13px;letter-spacing:0.000px;color:#000;-webkit-text-stroke:0.2px #000;">west0655</div>
<div class="t" style="left:464.30px;top:584px;font-size:13px;line-height:13px;letter-spacing:0.000px;color:#000;-webkit-text-stroke:0.2px #000;">655</div>
<div class="t" style="left:533.30px;top:584px;font-size:13px;line-height:13px;letter-spacing:0.000px;color:#000;-webkit-text-stroke:0.2px #000;">655</div>
<div class="t" style="left:595.08px;top:584px;font-size:13px;line-height:13px;letter-spacing:0.000px;color:#000;-webkit-text-stroke:0.2px #000;">2854</div>
<div class="t" style="left:632.00px;top:584px;font-size:13px;line-height:13px;letter-spacing:0.000px;color:#000;-webkit-text-stroke:0.2px #000;">yes</div>
<div class="t" style="left:673.00px;top:584px;font-size:13px;line-height:13px;letter-spacing:0.000px;color:#000;-webkit-text-stroke:0.2px #000;">no</div>
<div class="t" style="left:712.00px;top:584px;font-size:13px;line-height:13px;letter-spacing:0.000px;color:#000;-webkit-text-stroke:0.2px #000;">no</div>
<div class="t" style="left:751.00px;top:584px;font-size:13px;line-height:13px;letter-spacing:0.000px;color:#000;-webkit-text-stroke:0.2px #000;">no</div>
<div class="t" style="left:798.45px;top:584px;font-size:13px;line-height:13px;letter-spacing:0.000px;color:#000;-webkit-text-stroke:0.2px #000;">0.006</div>
<div class="t" style="left:872.77px;top:584px;font-size:13px;line-height:13px;letter-spacing:0.000px;color:#000;-webkit-text-stroke:0.2px #000;">0</div>
<div class="t" style="left:884.00px;top:584px;font-size:13px;line-height:13px;letter-spacing:0.035px;color:#000;-webkit-text-stroke:0.2px #000;">chemical process simulation pr...</div>
<div class="a" style="left:19px;top:599px;width:14px;height:14px;box-sizing:border-box;border-radius:3px;background:#fff;border:1px solid #bdbdbd"></div>
<div class="t" style="left:48.50px;top:600px;font-size:13px;line-height:13px;letter-spacing:0.000px;color:#000;-webkit-text-stroke:0.2px #000;">x</div>
<div style="position:absolute;left:79px;top:606px;width:5px;height:2px;background:#000;opacity:0.6"></div>
<div style="position:absolute;left:104px;top:606px;width:5px;height:2px;background:#000;opacity:0.6"></div>
<div class="t" style="left:140.00px;top:600px;font-size:13px;line-height:13px;letter-spacing:0.266px;color:#000;-webkit-text-stroke:0.2px #000;">270</div>
<div class="t" style="left:166.50px;top:600px;font-size:13px;line-height:13px;letter-spacing:-1.281px;color:#000;-webkit-text-stroke:0.2px #000;">HB</div>
<div class="t" style="left:274.00px;top:600px;font-size:13px;line-height:13px;letter-spacing:0.000px;color:#000;-webkit-text-stroke:0.2px #000;">west0989</div>
<div class="t" style="left:464.30px;top:600px;font-size:13px;line-height:13px;letter-spacing:0.000px;color:#000;-webkit-text-stroke:0.2px #000;">989</div>
<div class="t" style="left:533.30px;top:600px;font-size:13px;line-height:13px;letter-spacing:0.000px;color:#000;-webkit-text-stroke:0.2px #000;">989</div>
<div class="t" style="left:595.08px;top:600px;font-size:13px;line-height:13px;letter-spacing:0.000px;color:#000;-webkit-text-stroke:0.2px #000;">3537</div>
<div class="t" style="left:632.00px;top:600px;font-size:13px;line-height:13px;letter-spacing:0.000px;color:#000;-webkit-text-stroke:0.2px #000;">yes</div>
<div class="t" style="left:673.00px;top:600px;font-size:13px;line-height:13px;letter-spacing:0.000px;color:#000;-webkit-text-stroke:0.2px #000;">no</div>
<div class="t" style="left:712.00px;top:600px;font-size:13px;line-height:13px;letter-spacing:0.000px;color:#000;-webkit-text-stroke:0.2px #000;">no</div>
<div class="t" style="left:751.00px;top:600px;font-size:13px;line-height:13px;letter-spacing:0.000px;color:#000;-webkit-text-stroke:0.2px #000;">no</div>
<div class="t" style="left:798.45px;top:600px;font-size:13px;line-height:13px;letter-spacing:0.000px;color:#000;-webkit-text-stroke:0.2px #000;">0.018</div>
<div class="t" style="left:847.45px;top:600px;font-size:13px;line-height:13px;letter-spacing:0.000px;color:#000;-webkit-text-stroke:0.2px #000;">0.004</div>
<div class="t" style="left:884.00px;top:600px;font-size:13px;line-height:13px;letter-spacing:0.035px;color:#000;-webkit-text-stroke:0.2px #000;">chemical process simulation pr...</div>
<div class="a" style="left:19px;top:615px;width:14px;height:14px;box-sizing:border-box;border-radius:3px;background:#fff;border:1px solid #bdbdbd"></div>
<div class="t" style="left:48.50px;top:616px;font-size:13px;line-height:13px;letter-spacing:0.000px;color:#000;-webkit-text-stroke:0.2px #000;">x</div>
<div style="position:absolute;left:79px;top:622px;width:5px;height:2px;background:#000;opacity:0.6"></div>
<div style="position:absolute;left:104px;top:622px;width:5px;height:2px;background:#000;opacity:0.6"></div>
<div class="t" style="left:140.00px;top:616px;font-size:13px;line-height:13px;letter-spacing:0.266px;color:#000;-webkit-text-stroke:0.2px #000;">271</div>
<div class="t" style="left:166.50px;top:616px;font-size:13px;line-height:13px;letter-spacing:-1.281px;color:#000;-webkit-text-stroke:0.2px #000;">HB</div>
<div class="t" style="left:274.00px;top:616px;font-size:13px;line-height:13px;letter-spacing:0.000px;color:#000;-webkit-text-stroke:0.2px #000;">west1505</div>
<div class="t" style="left:457.08px;top:616px;font-size:13px;line-height:13px;letter-spacing:0.000px;color:#000;-webkit-text-stroke:0.2px #000;">1505</div>
<div class="t" style="left:526.08px;top:616px;font-size:13px;line-height:13px;letter-spacing:0.000px;color:#000;-webkit-text-stroke:0.2px #000;">1505</div>
<div class="t" style="left:595.08px;top:616px;font-size:13px;line-height:13px;letter-spacing:0.000px;color:#000;-webkit-text-stroke:0.2px #000;">5445</div>
<div class="t" style="left:632.00px;top:616px;font-size:13px;line-height:13px;letter-spacing:0.000px;color:#000;-webkit-text-stroke:0.2px #000;">yes</div>
<div class="t" style="left:673.00px;top:616px;font-size:13px;line-height:13px;letter-spacing:0.000px;color:#000;-webkit-text-stroke:0.2px #000;">no</div>
<div class="t" style="left:712.00px;top:616px;font-size:13px;line-height:13px;letter-spacing:0.000px;color:#000;-webkit-text-stroke:0.2px #000;">no</div>
<div class="t" style="left:751.00px;top:616px;font-size:13px;line-height:13px;letter-spacing:0.000px;color:#000;-webkit-text-stroke:0.2px #000;">no</div>
<div class="t" style="left:798.45px;top:616px;font-size:13px;line-height:13px;letter-spacing:0.000px;color:#000;-webkit-text-stroke:0.2px #000;">0.001</div>
<div class="t" style="left:872.77px;top:616px;font-size:13px;line-height:13px;letter-spacing:0.000px;color:#000;-webkit-text-stroke:0.2px #000;">0</div>
<div class="t" style="left:884.00px;top:616px;font-size:13px;line-height:13px;letter-spacing:0.035px;color:#000;-webkit-text-stroke:0.2px #000;">chemical process simulation pr...</div>
<div style="position:absolute;left:1080px;top:487px;width:15px;height:142px;background:#f9f9f9;border-left:1px solid #e8e8e8;border-right:1px solid #f0f0f0;box-sizing:border-box"></div>
<div class="a" style="left:1084px;top:499px;width:8px;height:18px;border-radius:4px;background:#c1c1c1"></div>
<div style="position:absolute;left:4px;top:649px;width:755px;height:97px;box-sizing:border-box;border:1px solid #ffffff;"></div>
<div style="position:absolute;left:3px;top:648px;width:755px;height:97px;box-sizing:border-box;border:1px solid #a6a6a6;"></div>
<div style="position:absolute;left:8px;top:644px;width:66px;height:10px;background:#ececec"></div>
<div class="t" style="left:11.00px;top:643px;font-size:13px;line-height:13px;letter-spacing:0.543px;color:#000;-webkit-text-stroke:0.2px #000;">download</div>
<div class="a" style="left:18px;top:667px;width:95px;height:21px;box-sizing:border-box;border:1px solid #c3c3c3;border-bottom-color:#ababab;border-radius:4px;background:#fff"></div>
<div class="t" style="left:34.50px;top:671px;font-size:13px;line-height:13px;letter-spacing:0.521px;color:#000;-webkit-text-stroke:0.2px #000;">Download</div>
<div class="a" style="left:18px;top:712px;width:74px;height:21px;box-sizing:border-box;border:1px solid #c3c3c3;border-bottom-color:#ababab;border-radius:4px;background:#f6f6f6"></div>
<div class="t" style="left:34.50px;top:716px;font-size:13px;line-height:13px;letter-spacing:0.089px;color:#8e8e8e;-webkit-text-stroke:0.2px #8e8e8e;">Cancel</div>
<div class="a" style="left:131px;top:672px;width:14px;height:14px;border-radius:3px;background:#3b82f7"></div>
<svg class="a" style="left:131px;top:672px" width="14" height="14"><path d="M3.5 7.3 L6 10 L10.8 3.8" stroke="#fff" stroke-width="1.6" fill="none" stroke-linecap="round" stroke-linejoin="round"/></svg>
<div class="t" style="left:151.00px;top:673px;font-size:13px;line-height:13px;letter-spacing:0.083px;color:#000;-webkit-text-stroke:0.2px #000;">MATLAB (mat)</div>
<div class="a" style="left:255px;top:672px;width:14px;height:14px;box-sizing:border-box;border-radius:3px;background:#fff;border:1px solid #b5b5b5"></div>
<div class="t" style="left:275.00px;top:673px;font-size:13px;line-height:13px;letter-spacing:0.407px;color:#000;-webkit-text-stroke:0.2px #000;">Matrix Market (MM)</div>
<div class="a" style="left:413px;top:672px;width:14px;height:14px;box-sizing:border-box;border-radius:3px;background:#fff;border:1px solid #b5b5b5"></div>
<div class="t" style="left:433.00px;top:673px;font-size:13px;line-height:13px;letter-spacing:0.234px;color:#000;-webkit-text-stroke:0.2px #000;">Rutherford/Boeing (RB)</div>
<div class="t" style="left:613.00px;top:673px;font-size:13px;line-height:13px;letter-spacing:0.420px;color:#000;-webkit-text-stroke:0.2px #000;">Matrices selected: 1</div>
<div class="t" style="left:116.00px;top:717px;font-size:13px;line-height:13px;letter-spacing:0.354px;color:#000;-webkit-text-stroke:0.2px #000;">Overall progress:</div>
<div class="a" style="left:228px;top:720px;width:144px;height:6px;border-radius:3px;background:#3b86f7"></div>
<div class="t" style="left:390.00px;top:717px;font-size:13px;line-height:13px;letter-spacing:0.677px;color:#000;-webkit-text-stroke:0.2px #000;">Current file:</div>
<div class="a" style="left:471px;top:720px;width:144px;height:6px;box-sizing:border-box;border-radius:3px;background:#e0e0e0;border:1px solid #cdcdcd"></div>
<svg class="a" style="left:692px;top:72px" width="307" height="307" shape-rendering="crispEdges"><rect x="143" y="174" width="26" height="6" fill="#0588ff"/><rect x="169" y="203" width="12" height="5" fill="#0588ff"/><rect x="156" y="190" width="23" height="2" fill="#0588ff"/><rect x="79" y="182" width="15" height="3" fill="#0588ff"/><rect x="138" y="164" width="15" height="3" fill="#0588ff"/><rect x="79" y="210" width="15" height="3" fill="#0588ff"/><rect x="56" y="128" width="5" height="8" fill="#0588ff"/><rect x="58" y="154" width="8" height="5" fill="#0588ff"/><rect x="104" y="103" width="8" height="5" fill="#000000"/><rect x="256" y="121" width="8" height="5" fill="#0588ff"/><rect x="53" y="298" width="8" height="5" fill="#0588ff"/><rect x="233" y="103" width="7" height="5" fill="#000000"/><rect x="238" y="108" width="5" height="7" fill="#0588ff"/><rect x="210" y="231" width="2" height="17" fill="#0588ff"/><rect x="122" y="126" width="11" height="3" fill="#000000"/><rect x="50" y="246" width="11" height="3" fill="#0588ff"/><rect x="181" y="205" width="3" height="11" fill="#0588ff"/><rect x="199" y="228" width="11" height="3" fill="#0588ff"/><rect x="199" y="236" width="11" height="3" fill="#0588ff"/><rect x="73" y="59" width="6" height="5" fill="#0588ff"/><rect x="27" y="77" width="6" height="5" fill="#0588ff"/><rect x="66" y="108" width="5" height="6" fill="#0588ff"/><rect x="163" y="195" width="6" height="5" fill="#0a22f2"/><rect x="240" y="110" width="6" height="5" fill="#0588ff"/><rect x="40" y="36" width="5" height="5" fill="#06d2ff"/><rect x="81" y="74" width="5" height="5" fill="#0588ff"/><rect x="112" y="92" width="5" height="5" fill="#0588ff"/><rect x="115" y="95" width="5" height="5" fill="#0588ff"/><rect x="264" y="131" width="5" height="5" fill="#0588ff"/><rect x="266" y="134" width="5" height="5" fill="#0588ff"/><rect x="71" y="231" width="5" height="5" fill="#0588ff"/><rect x="71" y="244" width="5" height="5" fill="#0588ff"/><rect x="189" y="213" width="5" height="5" fill="#0588ff"/><rect x="289" y="290" width="5" height="5" fill="#000000"/><rect x="86" y="169" width="8" height="3" fill="#0588ff"/><rect x="122" y="123" width="8" height="3" fill="#06d2ff"/><rect x="117" y="141" width="8" height="3" fill="#0588ff"/><rect x="151" y="180" width="12" height="2" fill="#0588ff"/><rect x="204" y="246" width="8" height="3" fill="#0588ff"/><rect x="88" y="85" width="7" height="3" fill="#0588ff"/><rect x="79" y="195" width="7" height="3" fill="#0588ff"/><rect x="133" y="115" width="7" height="3" fill="#0588ff"/><rect x="169" y="192" width="7" height="3" fill="#0588ff"/><rect x="79" y="223" width="7" height="3" fill="#0588ff"/><rect x="192" y="231" width="7" height="3" fill="#06d2ff"/><rect x="5" y="69" width="4" height="5" fill="#06d2ff"/><rect x="215" y="67" width="5" height="4" fill="#0588ff"/><rect x="84" y="239" width="10" height="2" fill="#0588ff"/><rect x="192" y="221" width="10" height="2" fill="#0588ff"/><rect x="289" y="303" width="5" height="4" fill="#000000"/><rect x="9" y="2" width="3" height="6" fill="#0588ff"/><rect x="27" y="61" width="3" height="6" fill="#0588ff"/><rect x="243" y="64" width="6" height="3" fill="#000000"/><rect x="73" y="156" width="6" height="3" fill="#0a22f2"/><rect x="73" y="195" width="6" height="3" fill="#0a22f2"/><rect x="163" y="187" width="6" height="3" fill="#0588ff"/><rect x="73" y="223" width="6" height="3" fill="#0a22f2"/><rect x="58" y="251" width="3" height="6" fill="#0588ff"/><rect x="63" y="162" width="8" height="2" fill="#0588ff"/><rect x="86" y="198" width="8" height="2" fill="#0588ff"/><rect x="140" y="167" width="8" height="2" fill="#0a22f2"/><rect x="161" y="192" width="2" height="8" fill="#06d2ff"/><rect x="86" y="226" width="8" height="2" fill="#0588ff"/><rect x="58" y="262" width="8" height="2" fill="#0588ff"/><rect x="53" y="280" width="8" height="2" fill="#0588ff"/><rect x="2" y="20" width="5" height="3" fill="#06d2ff"/><rect x="50" y="18" width="3" height="5" fill="#0588ff"/><rect x="35" y="28" width="5" height="3" fill="#000000"/><rect x="35" y="31" width="3" height="5" fill="#0588ff"/><rect x="40" y="31" width="3" height="5" fill="#0588ff"/><rect x="45" y="41" width="5" height="3" fill="#000000"/><rect x="27" y="44" width="3" height="5" fill="#0588ff"/><rect x="45" y="46" width="5" height="3" fill="#000000"/><rect x="45" y="51" width="5" height="3" fill="#000000"/><rect x="53" y="59" width="3" height="5" fill="#ffdb78"/><rect x="53" y="74" width="3" height="5" fill="#06d2ff"/><rect x="58" y="82" width="3" height="5" fill="#00f2e6"/><rect x="63" y="85" width="3" height="5" fill="#0588ff"/><rect x="91" y="88" width="5" height="3" fill="#0588ff"/><rect x="93" y="92" width="5" height="3" fill="#0588ff"/><rect x="66" y="92" width="5" height="3" fill="#0588ff"/><rect x="63" y="95" width="3" height="5" fill="#000000"/><rect x="63" y="100" width="3" height="5" fill="#0a22f2"/><rect x="2" y="69" width="3" height="5" fill="#7aee5a"/><rect x="9" y="69" width="3" height="5" fill="#0588ff"/><rect x="32" y="77" width="3" height="5" fill="#7aee5a"/><rect x="35" y="77" width="3" height="5" fill="#0588ff"/><rect x="107" y="100" width="5" height="3" fill="#0588ff"/><rect x="228" y="87" width="3" height="5" fill="#0a22f2"/><rect x="230" y="95" width="3" height="5" fill="#000000"/><rect x="233" y="100" width="5" height="3" fill="#0588ff"/><rect x="251" y="79" width="5" height="3" fill="#0a22f2"/><rect x="71" y="115" width="5" height="3" fill="#0588ff"/><rect x="68" y="136" width="3" height="5" fill="#0588ff"/><rect x="61" y="151" width="5" height="3" fill="#0588ff"/><rect x="66" y="156" width="5" height="3" fill="#0a22f2"/><rect x="81" y="159" width="5" height="3" fill="#06d2ff"/><rect x="89" y="184" width="5" height="3" fill="#0588ff"/><rect x="135" y="126" width="3" height="5" fill="#0588ff"/><rect x="122" y="146" width="5" height="3" fill="#06d2ff"/><rect x="127" y="146" width="3" height="5" fill="#000000"/><rect x="130" y="151" width="5" height="3" fill="#ffdb78"/><rect x="140" y="159" width="5" height="3" fill="#0588ff"/><rect x="148" y="177" width="5" height="3" fill="#0a22f2"/><rect x="161" y="177" width="5" height="3" fill="#0a22f2"/><rect x="151" y="182" width="5" height="3" fill="#0a22f2"/><rect x="156" y="182" width="5" height="3" fill="#0588ff"/><rect x="169" y="195" width="3" height="5" fill="#0588ff"/><rect x="261" y="128" width="5" height="3" fill="#0588ff"/><rect x="89" y="213" width="5" height="3" fill="#0588ff"/><rect x="68" y="233" width="5" height="3" fill="#0a22f2"/><rect x="89" y="241" width="5" height="3" fill="#0588ff"/><rect x="97" y="259" width="5" height="3" fill="#ffdb78"/><rect x="53" y="249" width="5" height="3" fill="#0588ff"/><rect x="71" y="249" width="5" height="3" fill="#0a22f2"/><rect x="58" y="264" width="5" height="3" fill="#0a22f2"/><rect x="61" y="269" width="5" height="3" fill="#0a22f2"/><rect x="61" y="272" width="5" height="3" fill="#0588ff"/><rect x="58" y="278" width="5" height="3" fill="#0588ff"/><rect x="53" y="290" width="5" height="3" fill="#000000"/><rect x="176" y="200" width="5" height="3" fill="#0588ff"/><rect x="184" y="205" width="5" height="3" fill="#0a22f2"/><rect x="179" y="218" width="5" height="3" fill="#0588ff"/><rect x="184" y="218" width="5" height="3" fill="#0a22f2"/><rect x="192" y="218" width="5" height="3" fill="#0588ff"/><rect x="197" y="218" width="5" height="3" fill="#0a22f2"/><rect x="186" y="223" width="3" height="5" fill="#0588ff"/><rect x="189" y="223" width="3" height="5" fill="#0a22f2"/><rect x="194" y="223" width="5" height="3" fill="#0a22f2"/><rect x="199" y="231" width="5" height="3" fill="#0588ff"/><rect x="107" y="264" width="5" height="3" fill="#000000"/><rect x="107" y="277" width="5" height="3" fill="#000000"/><rect x="248" y="277" width="5" height="3" fill="#7aee5a"/><rect x="284" y="290" width="5" height="3" fill="#0588ff"/><rect x="79" y="167" width="7" height="2" fill="#0588ff"/><rect x="138" y="154" width="7" height="2" fill="#0588ff"/><rect x="151" y="172" width="7" height="2" fill="#0588ff"/><rect x="32" y="54" width="6" height="2" fill="#0a22f2"/><rect x="25" y="61" width="2" height="6" fill="#06d2ff"/><rect x="103" y="100" width="4" height="3" fill="#06d2ff"/><rect x="212" y="54" width="3" height="4" fill="#0a22f2"/><rect x="225" y="82" width="3" height="4" fill="#0588ff"/><rect x="73" y="167" width="6" height="2" fill="#0a22f2"/><rect x="73" y="180" width="6" height="2" fill="#0a22f2"/><rect x="127" y="121" width="6" height="2" fill="#0588ff"/><rect x="133" y="133" width="2" height="6" fill="#0588ff"/><rect x="235" y="105" width="4" height="3" fill="#0a22f2"/><rect x="258" y="126" width="6" height="2" fill="#000000"/><rect x="73" y="208" width="6" height="2" fill="#0a22f2"/><rect x="97" y="257" width="6" height="2" fill="#0588ff"/><rect x="70" y="252" width="6" height="2" fill="#0588ff"/><rect x="204" y="234" width="6" height="2" fill="#0a22f2"/><rect x="204" y="239" width="6" height="2" fill="#0588ff"/><rect x="109" y="267" width="6" height="2" fill="#ffdb78"/><rect x="279" y="282" width="3" height="4" fill="#0588ff"/><rect x="271" y="305" width="6" height="2" fill="#ffdb78"/><rect x="9" y="8" width="5" height="2" fill="#ffdb78"/><rect x="20" y="10" width="2" height="5" fill="#000000"/><rect x="20" y="13" width="5" height="2" fill="#000000"/><rect x="20" y="26" width="5" height="2" fill="#000000"/><rect x="2" y="26" width="5" height="2" fill="#ffdb78"/><rect x="43" y="33" width="2" height="5" fill="#0588ff"/><rect x="27" y="54" width="5" height="2" fill="#ffdb78"/><rect x="0" y="54" width="2" height="5" fill="#06d2ff"/><rect x="2" y="54" width="2" height="5" fill="#0588ff"/><rect x="79" y="67" width="2" height="5" fill="#0588ff"/><rect x="86" y="82" width="5" height="2" fill="#0a22f2"/><rect x="61" y="100" width="2" height="5" fill="#0588ff"/><rect x="220" y="72" width="5" height="2" fill="#0a22f2"/><rect x="68" y="149" width="5" height="2" fill="#000000"/><rect x="102" y="102" width="10" height="1" fill="#0588ff"/><rect x="117" y="144" width="5" height="2" fill="#ffdb78"/><rect x="153" y="159" width="2" height="5" fill="#0588ff"/><rect x="138" y="162" width="5" height="2" fill="#0a22f2"/><rect x="143" y="162" width="5" height="2" fill="#0588ff"/><rect x="148" y="162" width="5" height="2" fill="#0a22f2"/><rect x="138" y="167" width="2" height="5" fill="#06d2ff"/><rect x="161" y="190" width="5" height="2" fill="#0a22f2"/><rect x="256" y="118" width="2" height="5" fill="#000000"/><rect x="297" y="198" width="5" height="2" fill="#06d2ff"/><rect x="86" y="252" width="5" height="2" fill="#0588ff"/><rect x="61" y="252" width="5" height="2" fill="#0588ff"/><rect x="53" y="293" width="5" height="2" fill="#0588ff"/><rect x="56" y="305" width="5" height="2" fill="#0588ff"/><rect x="189" y="203" width="5" height="2" fill="#0588ff"/><rect x="176" y="208" width="5" height="2" fill="#0588ff"/><rect x="202" y="216" width="2" height="5" fill="#0588ff"/><rect x="192" y="234" width="5" height="2" fill="#0588ff"/><rect x="197" y="234" width="5" height="2" fill="#0a22f2"/><rect x="199" y="239" width="5" height="2" fill="#0a22f2"/><rect x="102" y="262" width="5" height="2" fill="#06d2ff"/><rect x="243" y="267" width="5" height="2" fill="#0588ff"/><rect x="251" y="275" width="5" height="2" fill="#0588ff"/><rect x="279" y="280" width="5" height="2" fill="#000000"/><rect x="274" y="303" width="5" height="2" fill="#0a22f2"/><rect x="277" y="305" width="5" height="2" fill="#0588ff"/><rect x="14" y="5" width="3" height="3" fill="#0588ff"/><rect x="14" y="10" width="3" height="3" fill="#06d2ff"/><rect x="17" y="10" width="3" height="3" fill="#3cf2b4"/><rect x="4" y="23" width="3" height="3" fill="#0588ff"/><rect x="22" y="23" width="3" height="3" fill="#000000"/><rect x="50" y="10" width="3" height="3" fill="#0a22f2"/><rect x="45" y="38" width="3" height="3" fill="#000000"/><rect x="53" y="38" width="3" height="3" fill="#ffdb78"/><rect x="50" y="46" width="3" height="3" fill="#0588ff"/><rect x="53" y="46" width="3" height="3" fill="#0a22f2"/><rect x="32" y="51" width="3" height="3" fill="#0588ff"/><rect x="58" y="69" width="3" height="3" fill="#3cf2b4"/><rect x="81" y="69" width="3" height="3" fill="#3cf2b4"/><rect x="217" y="64" width="3" height="3" fill="#000000"/><rect x="225" y="79" width="3" height="3" fill="#000000"/><rect x="222" y="82" width="3" height="3" fill="#06d2ff"/><rect x="230" y="92" width="3" height="3" fill="#0a22f2"/><rect x="232" y="97" width="3" height="3" fill="#000000"/><rect x="248" y="64" width="3" height="3" fill="#0588ff"/><rect x="248" y="79" width="3" height="3" fill="#0588ff"/><rect x="271" y="56" width="3" height="3" fill="#0588ff"/><rect x="53" y="118" width="3" height="3" fill="#000000"/><rect x="94" y="115" width="3" height="3" fill="#0588ff"/><rect x="73" y="123" width="3" height="3" fill="#0588ff"/><rect x="68" y="146" width="3" height="3" fill="#0a22f2"/><rect x="73" y="146" width="3" height="3" fill="#0a22f2"/><rect x="68" y="151" width="3" height="3" fill="#0588ff"/><rect x="63" y="159" width="3" height="3" fill="#06d2ff"/><rect x="68" y="159" width="3" height="3" fill="#0a22f2"/><rect x="94" y="151" width="3" height="3" fill="#0588ff"/><rect x="135" y="118" width="3" height="3" fill="#0588ff"/><rect x="117" y="136" width="3" height="3" fill="#000000"/><rect x="127" y="151" width="3" height="3" fill="#0588ff"/><rect x="140" y="156" width="3" height="3" fill="#0588ff"/><rect x="145" y="159" width="3" height="3" fill="#000000"/><rect x="148" y="159" width="3" height="3" fill="#0588ff"/><rect x="140" y="169" width="3" height="3" fill="#0588ff"/><rect x="148" y="182" width="3" height="3" fill="#06d2ff"/><rect x="171" y="187" width="3" height="3" fill="#000000"/><rect x="171" y="195" width="3" height="3" fill="#000000"/><rect x="294" y="169" width="3" height="3" fill="#06d2ff"/><rect x="297" y="182" width="3" height="3" fill="#06d2ff"/><rect x="297" y="187" width="3" height="3" fill="#ffdb78"/><rect x="297" y="200" width="3" height="3" fill="#0a22f2"/><rect x="73" y="236" width="3" height="3" fill="#7aee5a"/><rect x="76" y="236" width="3" height="3" fill="#0588ff"/><rect x="99" y="254" width="3" height="3" fill="#000000"/><rect x="68" y="246" width="3" height="3" fill="#06d2ff"/><rect x="68" y="249" width="3" height="3" fill="#0588ff"/><rect x="81" y="249" width="3" height="3" fill="#06d2ff"/><rect x="58" y="259" width="3" height="3" fill="#ffdb78"/><rect x="58" y="269" width="3" height="3" fill="#000000"/><rect x="58" y="275" width="3" height="3" fill="#0588ff"/><rect x="63" y="278" width="3" height="3" fill="#0a22f2"/><rect x="53" y="282" width="3" height="3" fill="#0588ff"/><rect x="53" y="287" width="3" height="3" fill="#ffdb78"/><rect x="58" y="290" width="3" height="3" fill="#0588ff"/><rect x="53" y="295" width="3" height="3" fill="#000000"/><rect x="189" y="200" width="3" height="3" fill="#3cf2b4"/><rect x="189" y="205" width="3" height="3" fill="#0588ff"/><rect x="176" y="210" width="3" height="3" fill="#0a22f2"/><rect x="189" y="218" width="3" height="3" fill="#0588ff"/><rect x="207" y="228" width="3" height="3" fill="#000000"/><rect x="204" y="231" width="3" height="3" fill="#3cf2b4"/><rect x="207" y="231" width="3" height="3" fill="#0a22f2"/><rect x="204" y="241" width="3" height="3" fill="#0588ff"/><rect x="104" y="259" width="3" height="3" fill="#0588ff"/><rect x="109" y="269" width="3" height="3" fill="#06d2ff"/><rect x="112" y="269" width="3" height="3" fill="#0a22f2"/><rect x="112" y="277" width="3" height="3" fill="#0588ff"/><rect x="302" y="213" width="3" height="3" fill="#06d2ff"/><rect x="302" y="228" width="3" height="3" fill="#0a22f2"/><rect x="243" y="269" width="3" height="3" fill="#7aee5a"/><rect x="248" y="269" width="3" height="3" fill="#7aee5a"/><rect x="248" y="272" width="3" height="3" fill="#0588ff"/><rect x="253" y="277" width="3" height="3" fill="#0588ff"/><rect x="284" y="282" width="3" height="3" fill="#0588ff"/><rect x="289" y="287" width="3" height="3" fill="#0588ff"/><rect x="271" y="295" width="3" height="3" fill="#000000"/><rect x="218" y="70" width="4" height="2" fill="#0588ff"/><rect x="9" y="0" width="3" height="2" fill="#000000"/><rect x="12" y="2" width="2" height="3" fill="#000000"/><rect x="12" y="5" width="2" height="3" fill="#0a22f2"/><rect x="17" y="8" width="3" height="2" fill="#0588ff"/><rect x="12" y="10" width="2" height="3" fill="#7aee5a"/><rect x="12" y="15" width="2" height="3" fill="#0588ff"/><rect x="0" y="15" width="2" height="3" fill="#000000"/><rect x="22" y="18" width="3" height="2" fill="#0a22f2"/><rect x="7" y="23" width="2" height="3" fill="#0a22f2"/><rect x="9" y="26" width="3" height="2" fill="#0588ff"/><rect x="50" y="0" width="3" height="2" fill="#0588ff"/><rect x="50" y="26" width="3" height="2" fill="#0a22f2"/><rect x="53" y="26" width="3" height="2" fill="#0588ff"/><rect x="38" y="33" width="2" height="3" fill="#0a22f2"/><rect x="45" y="36" width="3" height="2" fill="#0588ff"/><rect x="48" y="38" width="2" height="3" fill="#0588ff"/><rect x="53" y="36" width="3" height="2" fill="#0a22f2"/><rect x="25" y="41" width="2" height="3" fill="#0588ff"/><rect x="25" y="46" width="2" height="3" fill="#ffdb78"/><rect x="53" y="49" width="3" height="2" fill="#0588ff"/><rect x="30" y="49" width="2" height="3" fill="#000000"/><rect x="30" y="51" width="2" height="3" fill="#0a22f2"/><rect x="45" y="54" width="3" height="2" fill="#ffdb78"/><rect x="53" y="54" width="3" height="2" fill="#0588ff"/><rect x="58" y="67" width="3" height="2" fill="#7aee5a"/><rect x="81" y="67" width="3" height="2" fill="#00f2e6"/><rect x="94" y="95" width="3" height="2" fill="#000000"/><rect x="53" y="90" width="3" height="2" fill="#0588ff"/><rect x="101" y="100" width="2" height="3" fill="#06d2ff"/><rect x="215" y="56" width="2" height="3" fill="#0a22f2"/><rect x="212" y="59" width="3" height="2" fill="#0588ff"/><rect x="215" y="61" width="2" height="3" fill="#000000"/><rect x="220" y="74" width="2" height="3" fill="#0588ff"/><rect x="222" y="77" width="3" height="2" fill="#0a22f2"/><rect x="230" y="90" width="3" height="2" fill="#06d2ff"/><rect x="269" y="56" width="2" height="3" fill="#7aee5a"/><rect x="271" y="72" width="3" height="2" fill="#7aee5a"/><rect x="276" y="72" width="3" height="2" fill="#7aee5a"/><rect x="279" y="72" width="3" height="2" fill="#0588ff"/><rect x="56" y="115" width="2" height="3" fill="#0588ff"/><rect x="97" y="115" width="2" height="3" fill="#0a22f2"/><rect x="71" y="123" width="2" height="3" fill="#06d2ff"/><rect x="68" y="144" width="3" height="2" fill="#ffdb78"/><rect x="71" y="146" width="2" height="3" fill="#0588ff"/><rect x="50" y="154" width="3" height="2" fill="#0588ff"/><rect x="66" y="151" width="2" height="3" fill="#0a22f2"/><rect x="58" y="154" width="3" height="2" fill="#06d2ff"/><rect x="66" y="159" width="2" height="3" fill="#0588ff"/><rect x="115" y="105" width="2" height="3" fill="#0588ff"/><rect x="112" y="113" width="3" height="2" fill="#0588ff"/><rect x="130" y="149" width="3" height="2" fill="#000000"/><rect x="156" y="159" width="2" height="3" fill="#3cf2b4"/><rect x="148" y="167" width="3" height="2" fill="#000000"/><rect x="143" y="169" width="2" height="3" fill="#0a22f2"/><rect x="158" y="172" width="3" height="2" fill="#000000"/><rect x="166" y="172" width="3" height="2" fill="#7aee5a"/><rect x="156" y="174" width="2" height="3" fill="#06d2ff"/><rect x="158" y="180" width="3" height="2" fill="#0a22f2"/><rect x="161" y="182" width="2" height="3" fill="#0a22f2"/><rect x="166" y="185" width="3" height="2" fill="#0588ff"/><rect x="179" y="187" width="2" height="3" fill="#0588ff"/><rect x="294" y="172" width="3" height="2" fill="#0a22f2"/><rect x="297" y="184" width="3" height="2" fill="#0a22f2"/><rect x="300" y="200" width="2" height="3" fill="#0588ff"/><rect x="68" y="231" width="3" height="2" fill="#06d2ff"/><rect x="71" y="236" width="2" height="3" fill="#0588ff"/><rect x="81" y="239" width="3" height="2" fill="#06d2ff"/><rect x="94" y="244" width="3" height="2" fill="#06d2ff"/><rect x="58" y="244" width="3" height="2" fill="#0a22f2"/><rect x="79" y="249" width="2" height="3" fill="#0588ff"/><rect x="63" y="262" width="3" height="2" fill="#0a22f2"/><rect x="58" y="267" width="3" height="2" fill="#0588ff"/><rect x="53" y="303" width="3" height="2" fill="#0a22f2"/><rect x="184" y="200" width="2" height="3" fill="#000000"/><rect x="174" y="205" width="2" height="3" fill="#0a22f2"/><rect x="186" y="208" width="3" height="2" fill="#0588ff"/><rect x="174" y="210" width="2" height="3" fill="#0588ff"/><rect x="184" y="210" width="2" height="3" fill="#0a22f2"/><rect x="194" y="216" width="3" height="2" fill="#000000"/><rect x="204" y="216" width="3" height="2" fill="#3cf2b4"/><rect x="186" y="221" width="3" height="2" fill="#0588ff"/><rect x="192" y="223" width="2" height="3" fill="#06d2ff"/><rect x="210" y="228" width="2" height="3" fill="#3cf2b4"/><rect x="107" y="262" width="2" height="3" fill="#000000"/><rect x="107" y="269" width="2" height="3" fill="#000000"/><rect x="300" y="210" width="2" height="3" fill="#0588ff"/><rect x="300" y="213" width="2" height="3" fill="#0a22f2"/><rect x="302" y="216" width="3" height="2" fill="#ffdb78"/><rect x="302" y="226" width="3" height="2" fill="#06d2ff"/><rect x="305" y="239" width="2" height="3" fill="#0588ff"/><rect x="246" y="269" width="2" height="3" fill="#000000"/><rect x="251" y="272" width="2" height="3" fill="#ffdb78"/><rect x="282" y="282" width="2" height="3" fill="#000000"/><rect x="286" y="285" width="3" height="2" fill="#0588ff"/><rect x="294" y="293" width="3" height="2" fill="#ffdb78"/><rect x="289" y="298" width="3" height="2" fill="#000000"/><rect x="294" y="298" width="3" height="2" fill="#0a22f2"/><rect x="294" y="305" width="3" height="2" fill="#0588ff"/><rect x="269" y="295" width="2" height="3" fill="#0588ff"/><rect x="271" y="298" width="3" height="2" fill="#0a22f2"/><rect x="273" y="300" width="2" height="3" fill="#0588ff"/><rect x="233" y="102" width="5" height="1" fill="#0588ff"/><rect x="0" y="18" width="2" height="2" fill="#0a22f2"/><rect x="2" y="18" width="2" height="2" fill="#0588ff"/><rect x="20" y="18" width="2" height="2" fill="#000000"/><rect x="7" y="26" width="2" height="2" fill="#06d2ff"/><rect x="38" y="31" width="2" height="2" fill="#000000"/><rect x="38" y="36" width="2" height="2" fill="#ffdb78"/><rect x="25" y="44" width="2" height="2" fill="#000000"/><rect x="48" y="54" width="2" height="2" fill="#0a22f2"/><rect x="89" y="90" width="2" height="2" fill="#0a22f2"/><rect x="228" y="85" width="2" height="2" fill="#06d2ff"/><rect x="274" y="72" width="2" height="2" fill="#0588ff"/><rect x="138" y="121" width="2" height="2" fill="#0588ff"/><rect x="120" y="139" width="2" height="2" fill="#000000"/><rect x="125" y="144" width="2" height="2" fill="#0588ff"/><rect x="161" y="180" width="2" height="2" fill="#000000"/><rect x="156" y="185" width="2" height="2" fill="#0588ff"/><rect x="174" y="190" width="2" height="2" fill="#0a22f2"/><rect x="79" y="239" width="2" height="2" fill="#0588ff"/><rect x="97" y="244" width="2" height="2" fill="#0588ff"/><rect x="97" y="252" width="2" height="2" fill="#000000"/><rect x="56" y="244" width="2" height="2" fill="#000000"/><rect x="68" y="252" width="2" height="2" fill="#7aee5a"/><rect x="184" y="203" width="2" height="2" fill="#0588ff"/><rect x="184" y="208" width="2" height="2" fill="#000000"/><rect x="197" y="216" width="2" height="2" fill="#0588ff"/><rect x="192" y="226" width="2" height="2" fill="#0588ff"/><rect x="202" y="234" width="2" height="2" fill="#0588ff"/><rect x="197" y="239" width="2" height="2" fill="#06d2ff"/><rect x="102" y="257" width="2" height="2" fill="#0588ff"/><rect x="107" y="267" width="2" height="2" fill="#0588ff"/><rect x="305" y="242" width="2" height="2" fill="#0a22f2"/><rect x="305" y="244" width="2" height="2" fill="#7aee5a"/><rect x="282" y="285" width="2" height="2" fill="#0a22f2"/><rect x="282" y="287" width="2" height="2" fill="#ffdb78"/><rect x="292" y="298" width="2" height="2" fill="#06d2ff"/><rect x="292" y="301" width="2" height="2" fill="#000000"/><rect x="269" y="298" width="2" height="2" fill="#ffdb78"/><rect x="102" y="262" width="1" height="2" fill="#0588ff"/></svg>
</div></body></html>
